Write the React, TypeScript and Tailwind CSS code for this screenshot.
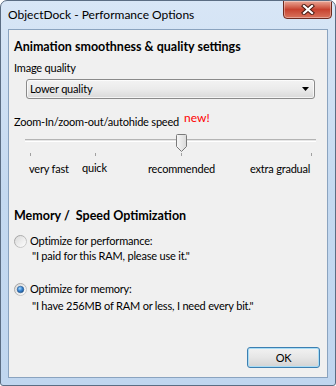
import React from "react";

function CloseGlyph() {
  return (
    <svg width="14" height="11" viewBox="0 0 14 11">
      <path d="M3 2 L11 9 M11 2 L3 9" stroke="#4a1c14" strokeWidth="4.2" strokeLinecap="square" />
      <path d="M3 2 L11 9 M11 2 L3 9" stroke="#ffffff" strokeWidth="2.2" strokeLinecap="square" />
    </svg>
  );
}

function Radio({ checked }: { checked?: boolean }) {
  return (
    <svg width="13" height="13" viewBox="0 0 13 13" className="shrink-0">
      <defs>
        <linearGradient id={checked ? "rb1" : "rb0"} x1="0" y1="0" x2="1" y2="1">
          <stop offset="0" stopColor="#9a9a9a" />
          <stop offset="1" stopColor="#d4d4d4" />
        </linearGradient>
        <linearGradient id={checked ? "rf1" : "rf0"} x1="0" y1="0" x2="1" y2="1">
          <stop offset="0" stopColor="#d8d8d8" />
          <stop offset="1" stopColor="#ffffff" />
        </linearGradient>
        <radialGradient id="rdot" cx="0.4" cy="0.35" r="0.7">
          <stop offset="0" stopColor="#a9dcff" />
          <stop offset="0.5" stopColor="#3a86d4" />
          <stop offset="1" stopColor="#1b4f8a" />
        </radialGradient>
      </defs>
      <circle cx="6.5" cy="6.5" r="6" fill={`url(#${checked ? "rf1" : "rf0"})`} stroke={`url(#${checked ? "rb1" : "rb0"})`} strokeWidth="1" />
      {checked && <circle cx="6.5" cy="6.5" r="3.3" fill="url(#rdot)" stroke="#2b5a8c" strokeWidth="0.6" />}
    </svg>
  );
}

function Slider() {
  const ticks = [16, 81, 167, 297];
  return (
    <svg width="306" height="24" viewBox="0 0 306 24" className="block">
      <defs>
        <linearGradient id="thumb" x1="0" y1="0" x2="1" y2="0">
          <stop offset="0" stopColor="#f7f7f7" />
          <stop offset="1" stopColor="#d9d9d9" />
        </linearGradient>
      </defs>
      <rect x="11" y="5" width="291" height="1" fill="#b4b4b4" />
      <rect x="11" y="6" width="291" height="1" fill="#e6e6e6" />
      <rect x="11" y="7" width="291" height="1" fill="#ffffff" />
      {ticks.map((t) => (
        <rect key={t} x={t} y="19" width="1" height="3" fill="#a0a0a0" />
      ))}
      <path
        d="M162.5 1.5 Q162.5 0.5 163.5 0.5 H171.5 Q172.5 0.5 172.5 1.5 V12.5 L167.5 17.5 L162.5 12.5 Z"
        fill="url(#thumb)"
        stroke="#7a7a7a"
        strokeWidth="1"
      />
    </svg>
  );
}

export default function App() {
  return (
    <div className="w-[336px] h-[386px] bg-white [font-family:Lato,sans-serif] text-[11px] tracking-[-0.2px] text-black">
      <div className="w-[336px] h-[386px] rounded-t-[7px] rounded-b-[3px] border border-[#5b6d83] bg-gradient-to-b from-[#d8e6f6] via-[#c4d9f0] to-[#c0d6ef] flex flex-col overflow-hidden">
        <div className="h-[28px] flex items-start shrink-0">
          <span className="ml-[7px] mt-[6px] leading-[16px] text-[12px] tracking-normal">ObjectDock - Performance Options</span>
          <div className="ml-auto mr-[3px] -mt-px w-[49px] h-[19px] rounded-b-[4px] border border-[#6e2a1f] bg-gradient-to-b from-[#e9a797] via-[#c7422f] to-[#d9735c] flex items-center justify-center shadow-[inset_0_0_0_1px_rgba(255,255,255,0.35)]">
            <CloseGlyph />
          </div>
        </div>
        <div className="mx-[7px] mb-[7px] flex-1 border border-[#8aa3bf] bg-[#f0f0f0] flex flex-col pl-[5px]">
          <div className="mt-[9px] leading-[16px] font-bold text-[12.5px] tracking-normal">Animation smoothness &amp; quality settings</div>
          <div className="mt-[5px] leading-[16px]">Image quality</div>
          <div className="mt-[3px] ml-[12px] w-[289px] h-[20px] rounded-[3px] border border-[#8a8a8a] bg-gradient-to-b from-[#f3f3f3] via-[#ebebeb] to-[#d9d9d9] flex items-center pl-[3px] pr-[5px] shadow-[inset_0_0_0_1px_rgba(255,255,255,0.7)]">
            <span className="leading-[16px]">Lower quality</span>
            <svg width="7" height="4" viewBox="0 0 7 4" className="ml-auto">
              <path d="M0 0 H7 L3.5 4 Z" fill="#000" />
            </svg>
          </div>
          <div className="mt-[15px] flex items-start">
            <span className="leading-[16px]">Zoom-In/zoom-out/autohide speed</span>
            <span className="ml-[5px] -mt-[3px] leading-[14px] text-[12px] tracking-normal text-[#ff0000]">new!</span>
          </div>
          <div className="mt-[4px]">
            <Slider />
          </div>
          <div className="mt-[3px] ml-[15px] flex leading-[16px]">
            <span className="w-[53px]">very fast</span>
            <span className="w-[66px] -mt-px">quick</span>
            <span className="w-[102px]">recommended</span>
            <span>extra gradual</span>
          </div>
          <div className="mt-[31px] leading-[16px] font-bold text-[12.5px] tracking-normal">Memory /&nbsp; Speed Optimization</div>
          <div className="mt-[9px] flex items-start">
            <div className="mt-[2px]">
              <Radio />
            </div>
            <div className="ml-[3px] flex flex-col">
              <span className="leading-[16px]">Optimize for performance:</span>
              <span className="leading-[14px] ml-[2px]">"I paid for this RAM, please use it."</span>
            </div>
          </div>
          <div className="mt-[18px] flex items-start">
            <div className="mt-[2px]">
              <Radio checked />
            </div>
            <div className="ml-[3px] flex flex-col">
              <span className="leading-[16px]">Optimize for memory:</span>
              <span className="leading-[17px] ml-[2px]">"I have 256MB of RAM or less, I need every bit."</span>
            </div>
          </div>
          <div className="mt-auto mb-[9px] mr-[7px] self-end w-[73px] h-[21px] rounded-[3px] border border-[#3c7fb1] bg-gradient-to-b from-[#f2f2f2] via-[#e6e6e6] to-[#d3d3d3] shadow-[inset_0_0_0_1px_#a8dcf5] flex items-center justify-center">
            <span className="leading-[16px]">OK</span>
          </div>
        </div>
      </div>
    </div>
  );
}
